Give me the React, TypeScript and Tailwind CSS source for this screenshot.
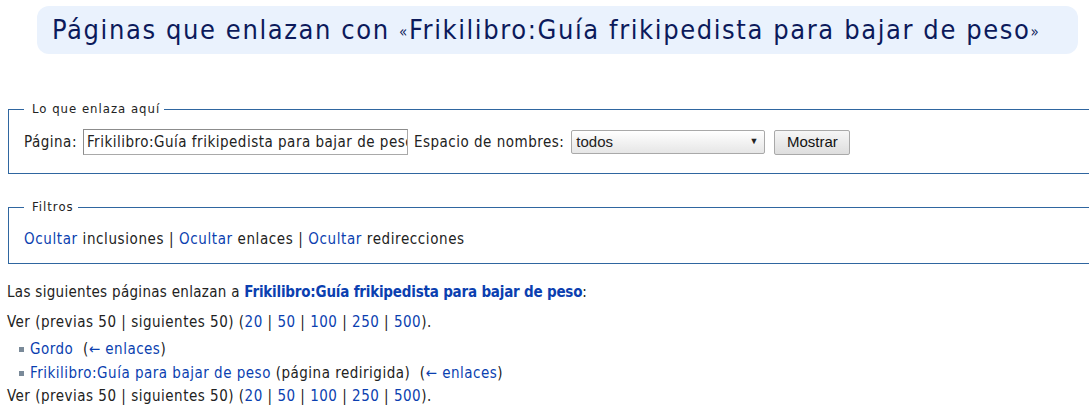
const link = 'text-[#0b3fb0]';

function Sep() {
  return <span className="text-[#222]"> | </span>;
}

function Pager() {
  return (
    <p className="leading-[23px]">
      Ver (previas 50 | siguientes 50) (
      <a className={link}>20</a>
      <Sep />
      <a className={link}>50</a>
      <Sep />
      <a className={link}>100</a>
      <Sep />
      <a className={link}>250</a>
      <Sep />
      <a className={link}>500</a>).
    </p>
  );
}

function Bullet() {
  return <span className="mr-[6px] inline-block h-[5px] w-[5px] translate-y-[-2px] bg-[#7a8a99]" />;
}

export default function App() {
  return (
    <div className="h-[409px] w-[1089px] overflow-hidden bg-white font-['DejaVu_Sans_Condensed','DejaVu_Sans',sans-serif] text-[15px] tracking-[0.5px] text-[#222]">
      {/* Heading */}
      <div className="ml-[37px] mt-[6px] h-[48px] w-[1041px] rounded-[12px] bg-[#eaf2fd] pl-[15px] text-[27px] leading-[48px] tracking-[1.6px] whitespace-nowrap text-[#0c1a5b]">
        Páginas que enlazan con <span className="text-[15px] align-[2px]">«</span>Frikilibro:Guía frikipedista para bajar de peso<span className="text-[15px] align-[2px]">»</span>
      </div>

      {/* Lo que enlaza aquí */}
      <fieldset className="ml-[8px] mt-[47px] h-[73px] w-[1100px] border border-[#2f66a0] px-[15px]">
        <legend className="pl-[8px] pr-[4px] text-[13px] leading-[16px] tracking-[1px]">Lo que enlaza aquí</legend>
        <div className="mt-[12px] flex items-center">
          <label className="mr-[6px]">Página:</label>
          <div className="h-[26px] w-[325px] overflow-hidden border border-[#a9a9a9] border-t-[#8c8c8c] border-l-[#8c8c8c] bg-white pl-[3px] leading-[24px] whitespace-nowrap">
            Frikilibro:Guía frikipedista para bajar de peso
          </div>
          <label className="ml-[6px] mr-[7px]">Espacio de nombres:</label>
          <div className="flex h-[24px] w-[194px] items-center justify-between rounded-[2px] border border-[#a9a9a9] bg-gradient-to-b from-white to-[#e6e6e6] pl-[4px] pr-[6px] font-['Liberation_Sans',Arial,sans-serif] text-[15px] tracking-normal">
            <span>todos</span>
            <span className="text-[9px] text-[#222]">▼</span>
          </div>
          <button className="ml-[9px] h-[25px] w-[76px] rounded-[2px] border border-[#a9a9a9] bg-gradient-to-b from-[#f6f6f6] to-[#dedede] font-['Liberation_Sans',Arial,sans-serif] text-[15px] tracking-normal text-[#111]">
            Mostrar
          </button>
        </div>
      </fieldset>

      {/* Filtros */}
      <fieldset className="ml-[8px] mt-[25px] h-[65px] w-[1100px] border border-[#2f66a0] px-[15px]">
        <legend className="pl-[8px] pr-[4px] text-[13px] leading-[16px] tracking-[1px]">Filtros</legend>
        <div className="mt-[13px] tracking-[0.6px]">
          <a className={link}>Ocultar</a> inclusiones | <a className={link}>Ocultar</a> enlaces | <a className={link}>Ocultar</a> redirecciones
        </div>
      </fieldset>

      {/* Results */}
      <div className="ml-[7px] mt-[17px]">
        <p className="leading-[23px] tracking-[0.3px]">
          Las siguientes páginas enlazan a <a className={`${link} font-bold tracking-[-0.2px]`}>Frikilibro:Guía frikipedista para bajar de peso</a>:
        </p>
        <div className="mt-[7px]">
          <Pager />
        </div>
        <ul className="mt-[3px] pl-[12px]">
          <li className="leading-[24px]">
            <Bullet />
            <a className={link}>Gordo</a>&nbsp; (<a className={link}>← enlaces</a>)
          </li>
          <li className="leading-[24px]">
            <Bullet />
            <a className={link}>Frikilibro:Guía para bajar de peso</a> (página redirigida)&nbsp; (<a className={link}>← enlaces</a>)
          </li>
        </ul>
        <Pager />
      </div>
    </div>
  );
}
